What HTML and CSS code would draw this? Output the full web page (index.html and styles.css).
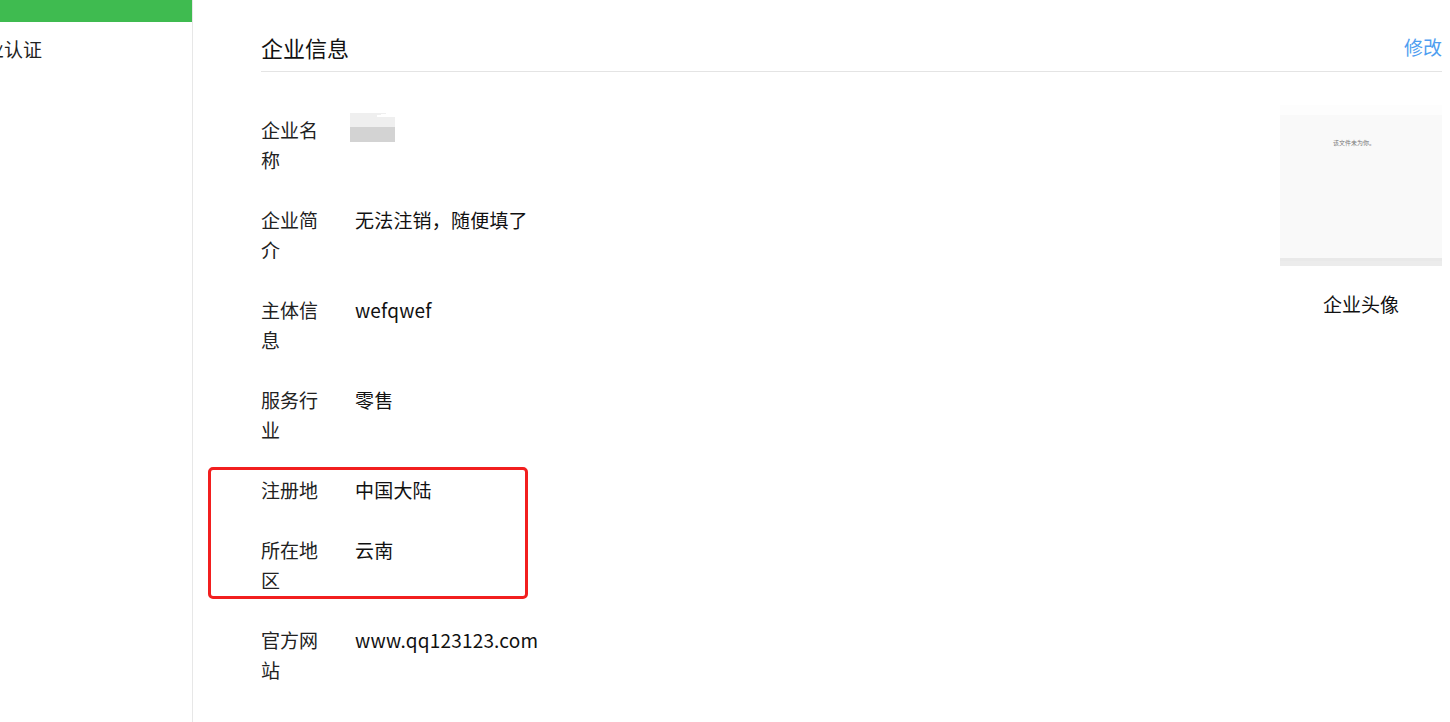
FILE: index.html
```html
<!DOCTYPE html>
<html lang="zh-CN">
<head>
  <meta charset="UTF-8">
  <meta name="viewport" content="width=device-width, initial-scale=1.0">
  <title>企业信息</title>
  <link rel="stylesheet" href="styles.css">
</head>
<body>
  <div class="sidebar">
    <div class="sidebar-active"></div>
    <div class="sidebar-item">企业认证</div>
  </div>

  <div class="main">
    <div class="main-header">
      <h2 class="main-title">企业信息</h2>
      <a class="edit-link" href="#">修改</a>
    </div>

    <div class="main-body">
      <div class="info-list">
        <div class="info-row">
          <div class="info-label">企业名称</div>
          <div class="info-value"><div class="blur-name"></div></div>
        </div>
        <div class="info-row">
          <div class="info-label">企业简介</div>
          <div class="info-value">无法注销，随便填了</div>
        </div>
        <div class="info-row">
          <div class="info-label">主体信息</div>
          <div class="info-value">wefqwef</div>
        </div>
        <div class="info-row">
          <div class="info-label">服务行业</div>
          <div class="info-value">零售</div>
        </div>

        <div class="marked-group">
          <div class="info-row">
            <div class="info-label">注册地</div>
            <div class="info-value">中国大陆</div>
          </div>
          <div class="info-row">
            <div class="info-label">所在地区</div>
            <div class="info-value">云南</div>
          </div>
        </div>

        <div class="info-row">
          <div class="info-label">官方网站</div>
          <div class="info-value">www.qq123123.com</div>
        </div>
      </div>

      <div class="avatar-box">
        <div class="avatar-img">
          <span class="avatar-note">该文件未为你。</span>
        </div>
        <div class="avatar-caption">企业头像</div>
      </div>
    </div>
  </div>
</body>
</html>
```

FILE: styles.css
```css
body {
  margin: 0;
  font-family: "Microsoft YaHei", "Noto Sans CJK SC", sans-serif;
  color: #222;
  background-color: #fff;
  display: flex;
  flex-direction: row;
  min-height: 722px;
  overflow: hidden;
}

.sidebar {
  width: 192px;
  flex-shrink: 0;
  border-right: 1px solid #e7e7e7;
  overflow: hidden;
}

.sidebar-active {
  height: 22px;
  background-color: #3fbb50;
}

.sidebar-item {
  margin-left: -34px;
  font-size: 19px;
  line-height: 30px;
  padding-top: 12px;
  white-space: nowrap;
}

.main {
  flex: 1;
  padding: 0 8px 0 68px;
}

.main-header {
  display: flex;
  justify-content: space-between;
  align-items: center;
  padding: 32px 0 9px;
  border-bottom: 1px solid #e4e4e4;
}

.main-title {
  margin: 0;
  font-size: 22px;
  font-weight: normal;
  line-height: 30px;
  color: #111;
}

.edit-link {
  font-size: 19px;
  line-height: 30px;
  color: #4f9ef0;
  text-decoration: none;
}

.main-body {
  display: flex;
  padding-top: 33px;
}

.info-list {
  flex: 1;
  padding-top: 10px;
}

.info-row {
  display: flex;
  margin-bottom: 30px;
  font-size: 19px;
  line-height: 30px;
}

.info-label {
  width: 60px;
  margin-right: 34px;
  flex-shrink: 0;
}

.info-value {
  color: #111;
  letter-spacing: 0.2px;
}

.blur-name {
  width: 45px;
  height: 29px;
  margin: -2px 0 0 -5px;
  background:
    linear-gradient(170deg, transparent 0 30%, #fff 30% 100%) right top / 18px 4px no-repeat,
    linear-gradient(#efefef 0 14px, #d3d3d3 14px 29px);
}

.marked-group {
  position: relative;
}

.marked-group::after {
  content: "";
  position: absolute;
  left: -53px;
  top: -8px;
  width: 314px;
  height: 126px;
  border: 3px solid #f21f1f;
  border-radius: 5px;
}

.avatar-box {
  width: 162px;
  flex-shrink: 0;
  text-align: center;
}

.avatar-img {
  position: relative;
  height: 161px;
  background: linear-gradient(#fdfdfd 0 10px, #f9f9f9 10px 153px, #e9e9e9 153px 156px, #ececec 156px 161px);
}

.avatar-note {
  position: absolute;
  left: 53px;
  top: 33px;
  font-size: 6px;
  color: #777;
  white-space: nowrap;
}

.avatar-caption {
  margin-top: 23px;
  font-size: 19px;
  line-height: 30px;
  color: #111;
}
```
